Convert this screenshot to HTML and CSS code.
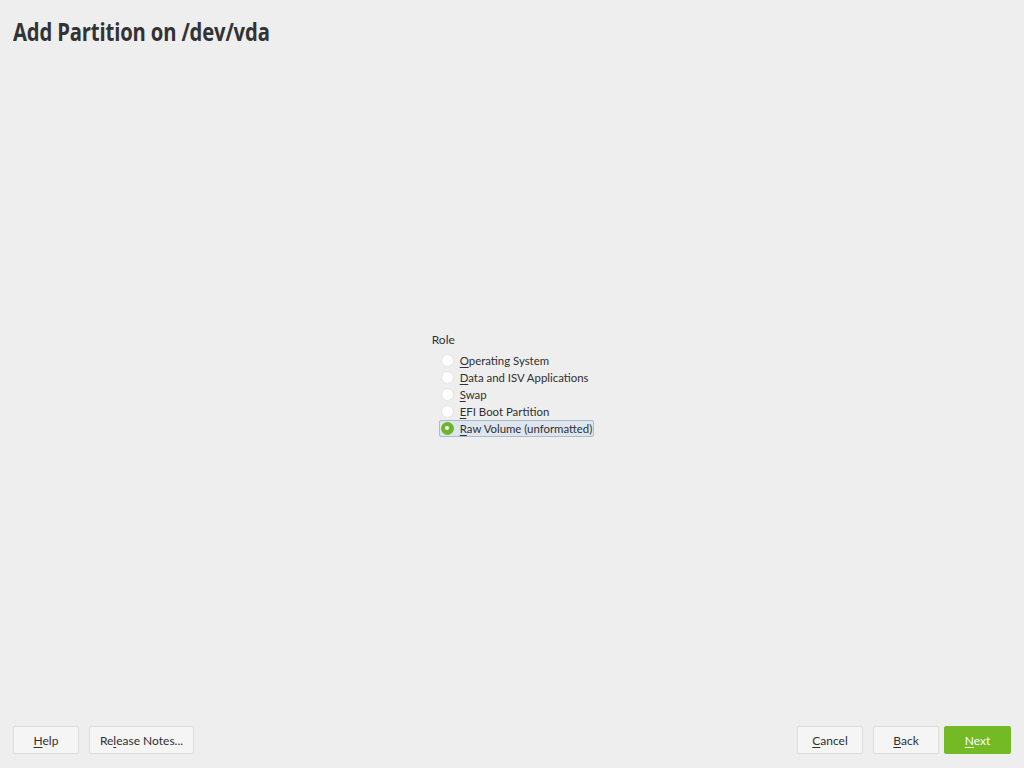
FILE: index.html
```html
<!DOCTYPE html>
<html>
<head>
<meta charset="utf-8">
<link rel="stylesheet" href="styles.css">
</head>
<body>
<div class="page">
  <header class="header">
    <h1 class="title">Add Partition on /dev/vda</h1>
  </header>
  <main class="content">
    <fieldset class="group">
      <div class="group-label">Role</div>
      <div class="options">
        <label class="option"><span class="radio"></span><span class="text"><u>O</u>perating System</span></label>
        <label class="option"><span class="radio"></span><span class="text"><u>D</u>ata and ISV Applications</span></label>
        <label class="option"><span class="radio"></span><span class="text"><u>S</u>wap</span></label>
        <label class="option"><span class="radio"></span><span class="text"><u>E</u>FI Boot Partition</span></label>
        <label class="option selected"><span class="radio checked"></span><span class="text"><u>R</u>aw Volume (unformatted)</span></label>
      </div>
    </fieldset>
  </main>
  <footer class="footer">
    <div class="btns">
      <button class="btn btn-help"><u>H</u>elp</button>
      <button class="btn btn-notes">Re<u>l</u>ease Notes...</button>
    </div>
    <div class="btns">
      <button class="btn btn-cancel"><u>C</u>ancel</button>
      <button class="btn btn-back"><u>B</u>ack</button>
      <button class="btn btn-next"><u>N</u>ext</button>
    </div>
  </footer>
</div>
</body>
</html>
```
FILE: styles.css
```css
* { box-sizing: border-box; }
html, body { margin: 0; padding: 0; }
body {
  background: #eeeeee;
  font-family: "Lato", "Open Sans", sans-serif;
  font-size: 12px;
  color: #303030;
}
.page {
  width: 1024px;
  height: 768px;
  display: flex;
  flex-direction: column;
}
.header {
  padding: 16px 0 0 13px;
  height: 60px;
}
.title {
  margin: 0;
  font-family: "Open Sans", sans-serif;
  font-weight: 700;
  font-size: 25px;
  line-height: 30px;
  color: #333333;
  display: inline-block;
  transform: scaleX(0.81);
  transform-origin: left center;
  letter-spacing: -0.2px;
}
.content {
  flex: 1;
  display: flex;
  justify-content: center;
  align-items: center;
}
.group {
  border: 0;
  margin: 0;
  padding: 0;
  margin-left: 2px;
  margin-top: -18px;
}
.group-label {
  line-height: 16px;
  margin-bottom: 4px;
}
.options {
  display: flex;
  flex-direction: column;
  align-items: flex-start;
  padding-left: 7px;
}
.option {
  display: flex;
  align-items: center;
  height: 17px;
  padding: 0 1px 0 1px;
  border: 1px solid transparent;
  border-radius: 2px;
  font-size: 11.4px;
}
.option.selected {
  background: #dde6ee;
  border-color: #a9bccc;
}
.radio {
  width: 13px;
  height: 13px;
  border-radius: 50%;
  background: #ffffff;
  border: 1px solid #e2e2e2;
  margin-right: 6px;
  position: relative;
  flex: none;
}
.radio.checked {
  background: #6db52a;
  border-color: #6db52a;
}
.radio.checked::after {
  content: "";
  position: absolute;
  left: 3.5px;
  top: 3.5px;
  width: 4px;
  height: 4px;
  border-radius: 50%;
  background: #ffffff;
}
.text { white-space: nowrap; line-height: 15px; }
u { text-decoration: underline; text-underline-offset: 2px; }
.footer {
  display: flex;
  justify-content: space-between;
  padding: 0 13px 14px 13px;
}
.btns { display: flex; gap: 10px; }
.btns .btn-next { margin-left: -5px; }
.btn {
  height: 28px;
  border: 1px solid #dcdcdc;
  border-radius: 2px;
  background: #f5f5f5;
  font-family: "Lato", "Open Sans", sans-serif;
  font-size: 12px;
  color: #303030;
  padding: 0;
}
.btn-help { width: 66px; }
.btn-notes { width: 105px; }
.btn-cancel { width: 66px; }
.btn-back { width: 66px; }
.btn-next {
  width: 67px;
  background: #73ba25;
  border-color: #73ba25;
  color: #ffffff;
}
```
